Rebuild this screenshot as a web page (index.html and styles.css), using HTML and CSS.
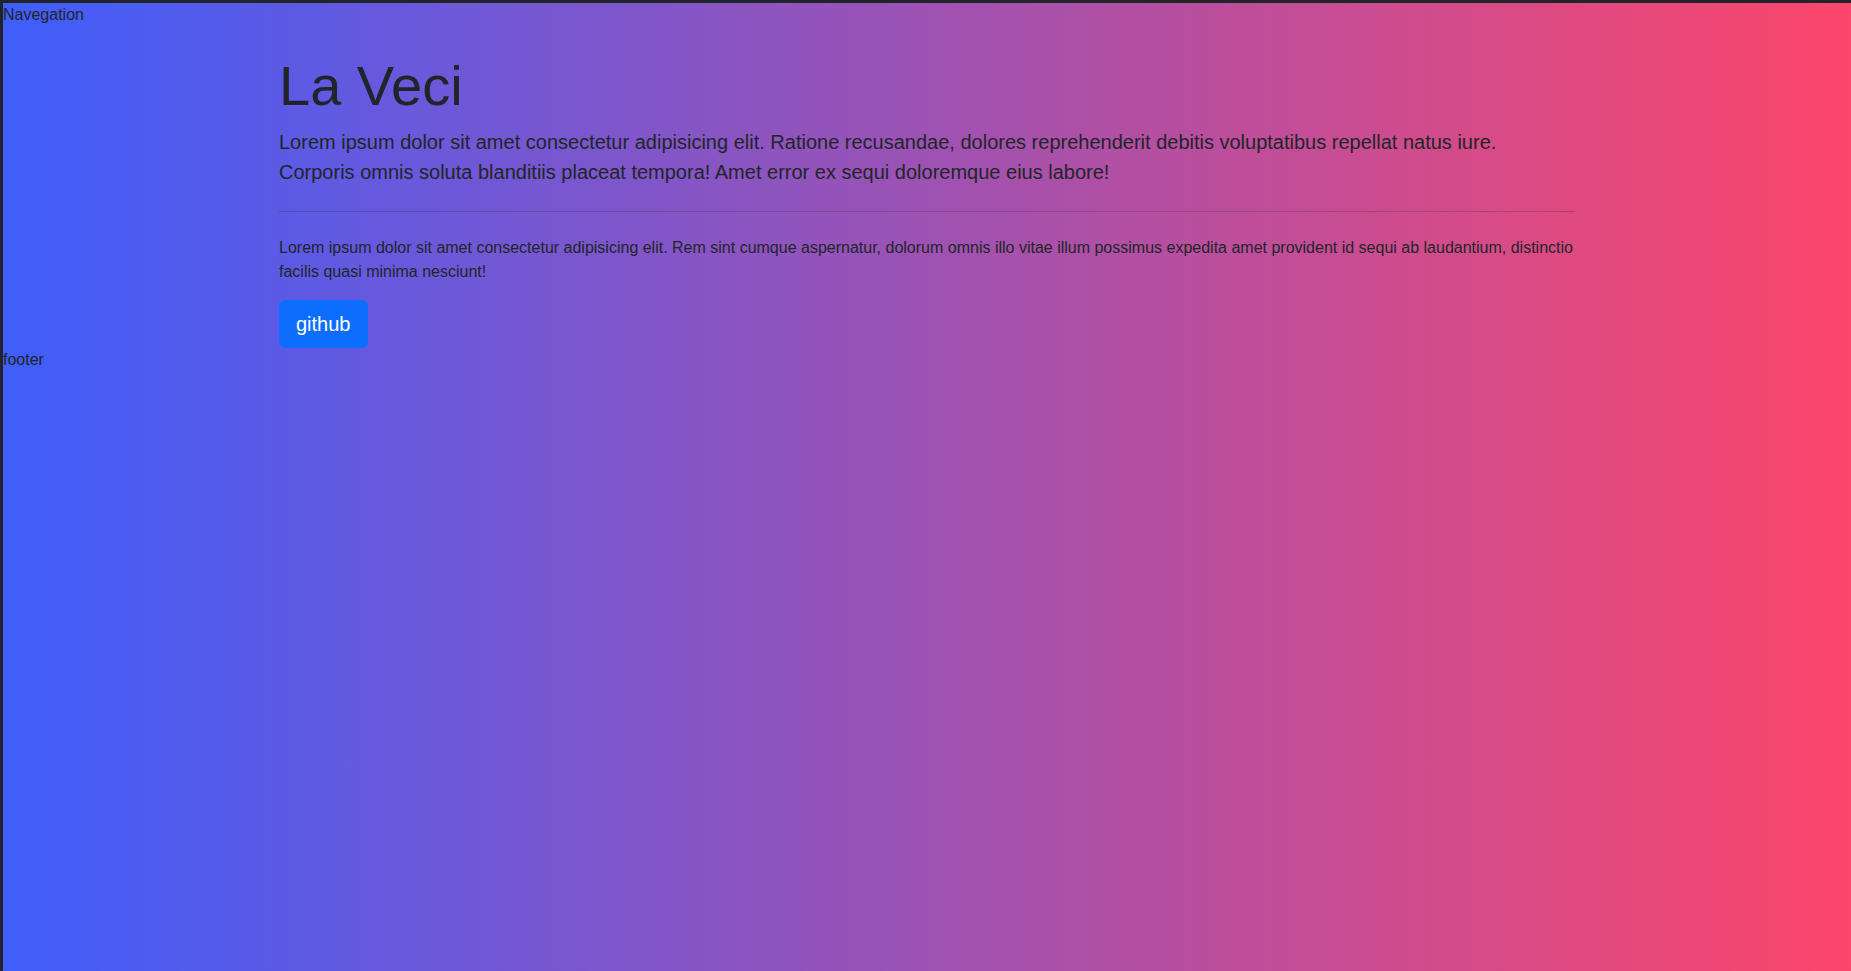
FILE: index.html
```html
<!DOCTYPE html>
<html lang="en">
<head>
<meta charset="utf-8">
<title>La Veci</title>
<link rel="stylesheet" href="styles.css">
</head>
<body>
<nav class="nav">Navegation</nav>
<main class="container">
  <h1 class="display">La Veci</h1>
  <p class="lead">Lorem ipsum dolor sit amet consectetur adipisicing elit. Ratione recusandae, dolores reprehenderit debitis voluptatibus repellat natus iure. Corporis omnis soluta blanditiis placeat tempora! Amet error ex sequi doloremque eius labore!</p>
  <hr class="divider">
  <p class="text">Lorem ipsum dolor sit amet consectetur adipisicing elit. Rem sint cumque aspernatur, dolorum omnis illo vitae illum possimus expedita amet provident id sequi ab laudantium, distinctio facilis quasi minima nesciunt!</p>
  <a class="btn" href="#">github</a>
</main>
<footer class="footer">footer</footer>
</body>
</html>
```
FILE: styles.css
```css
html {
  background: #212529;
  margin: 0;
  padding: 0;
}
body {
  margin: 3px 0 0 3px;
  min-height: calc(100vh - 3px);
  background: linear-gradient(to right, #3f5efb, #fc466b);
  font-family: "Liberation Sans", Arial, sans-serif;
  font-size: 16px;
  line-height: 1.5;
  color: #212529;
}
.nav {
  display: block;
}
.container {
  width: 1320px;
  box-sizing: border-box;
  margin: 0 auto;
  padding: 25px 12px 0;
}
.display {
  font-size: 56px;
  font-weight: 300;
  line-height: 1.2;
  margin: 0 0 8px;
}
.lead {
  font-size: 20px;
  font-weight: 300;
  line-height: 1.5;
  margin: 0 0 16px;
}
.divider {
  margin: 24px 0;
  border: 0;
  border-top: 1px solid currentColor;
  opacity: 0.25;
  color: inherit;
}
.text {
  margin: 0 0 16px;
}
.btn {
  display: inline-block;
  padding: 8px 16px;
  font-size: 20px;
  line-height: 1.5;
  color: #fff;
  background: #0d6efd;
  border: 1px solid #0d6efd;
  border-radius: 6px;
  text-decoration: none;
  vertical-align: top;
}
.footer {
  display: block;
}
```
